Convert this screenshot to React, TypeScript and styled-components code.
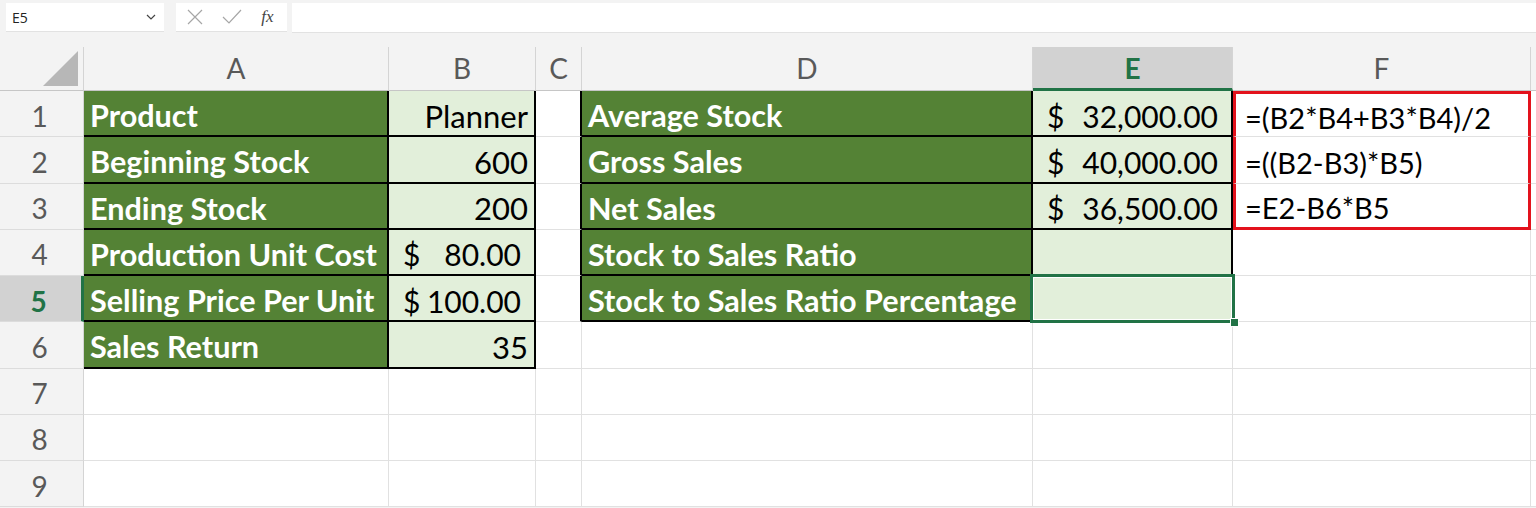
import styled, { createGlobalStyle } from "styled-components";

const GlobalStyle = createGlobalStyle`
  html, body {
    margin: 0;
    padding: 0;
    background: #ffffff;
  }
  body {
    font-family: "Lato", "Liberation Sans", sans-serif;
    overflow: hidden;
  }
`;

const Page = styled.div`
  width: 1536px;
  height: 508px;
  background: #f3f3f3;
  overflow: hidden;
`;

const FormulaBar = styled.div`
  display: flex;
  align-items: center;
  height: 47px;
  padding: 0 0 12px 6px;
  box-sizing: border-box;
  background: #f3f3f3;
`;

const NameBox = styled.div`
  display: flex;
  align-items: center;
  justify-content: space-between;
  width: 158px;
  height: 29px;
  padding: 0 8px 0 6px;
  box-sizing: border-box;
  background: #ffffff;
  border-bottom: 1px solid #e2e2e2;
  font-family: "Open Sans", "Liberation Sans", sans-serif;
  font-size: 14px;
  color: #222;
`;

const Buttons = styled.div`
  display: flex;
  align-items: center;
  justify-content: space-around;
  width: 111px;
  height: 29px;
  margin-left: 12px;
  padding: 0 4px 0 2px;
  box-sizing: border-box;
  background: #ffffff;
  border-bottom: 1px solid #e2e2e2;
`;

const Fx = styled.span`
  font-family: "Liberation Serif", serif;
  font-style: italic;
  font-size: 17px;
  color: #444;
`;

const FormulaInput = styled.div`
  flex: 1;
  height: 29px;
  margin-left: 5px;
  background: #ffffff;
  border-bottom: 1px solid #e2e2e2;
`;

const Sheet = styled.div`
  display: grid;
  grid-template-columns: 84px 305px 147px 46px 451px 200px 298px 1fr;
  grid-template-rows: 44px repeat(9, 46.25px);
  background: #ffffff;
`;

const Corner = styled.div`
  position: relative;
  background: #f3f3f3;
  border-right: 1px solid #d4d4d4;
  border-bottom: 1px solid #c6c6c6;

  &::after {
    content: "";
    position: absolute;
    right: 5px;
    bottom: 4px;
    width: 0;
    height: 0;
    border-left: 35px solid transparent;
    border-bottom: 35px solid #b7b7b7;
  }
`;

const ColHead = styled.div<{ $active?: boolean }>`
  display: flex;
  align-items: center;
  justify-content: center;
  box-sizing: border-box;
  background: ${(p) => (p.$active ? "#d2d2d2" : "#f3f3f3")};
  border-right: 1px solid #d4d4d4;
  border-bottom: ${(p) => (p.$active ? "3px solid #217346" : "1px solid #c6c6c6")};
  color: ${(p) => (p.$active ? "#217346" : "#595959")};
  font-weight: ${(p) => (p.$active ? 700 : 400)};
  font-size: 28px;
  padding-bottom: ${(p) => (p.$active ? "0" : "2px")};
`;

const RowHead = styled.div<{ $active?: boolean }>`
  display: flex;
  align-items: center;
  justify-content: center;
  box-sizing: border-box;
  background: ${(p) => (p.$active ? "#d2d2d2" : "#f3f3f3")};
  border-right: ${(p) => (p.$active ? "3px solid #217346" : "1px solid #d4d4d4")};
  border-bottom: 1px solid #dcdcdc;
  color: ${(p) => (p.$active ? "#217346" : "#595959")};
  font-weight: ${(p) => (p.$active ? 700 : 400)};
  font-size: 28px;
  padding: 4px 4px 0 0;
`;

type Fill = "dark" | "light" | "none";
type Edge = "black" | "red";

const fills: Record<Fill, string> = {
  dark: "#548235",
  light: "#e2efda",
  none: "#ffffff",
};

const edge = (e: Edge | undefined) =>
  e === "black" ? "2px solid #000000" : e === "red" ? "3px solid #e3121c" : "1px solid #e1e1e1";

const Cell = styled.div<{
  $fill?: Fill;
  $align?: "left" | "right";
  $right?: Edge;
  $bottom?: Edge;
  $left?: Edge;
  $top?: Edge;
  $selected?: boolean;
}>`
  position: relative;
  display: flex;
  align-items: center;
  justify-content: ${(p) => (p.$align === "right" ? "flex-end" : "flex-start")};
  box-sizing: border-box;
  padding: 5px 6px 0 ${(p) => (p.$left ? "9px" : "6px")};
  background: ${(p) => fills[p.$fill ?? "none"]};
  border-right: ${(p) => edge(p.$right)};
  border-bottom: ${(p) => edge(p.$bottom)};
  border-left: ${(p) => (p.$left ? edge(p.$left) : "none")};
  border-top: ${(p) => (p.$top ? edge(p.$top) : "none")};
  color: ${(p) => (p.$fill === "dark" ? "#ffffff" : "#000000")};
  font-weight: ${(p) => (p.$fill === "dark" ? 700 : 400)};
  font-size: ${(p) => (p.$fill === "dark" ? "30.6px" : p.$fill === "light" ? "31px" : "29px")};
  white-space: nowrap;
  overflow: visible;

  ${(p) =>
    p.$selected &&
    `
    &::before {
      content: "";
      position: absolute;
      left: -3px;
      top: -2px;
      right: -3px;
      bottom: -2px;
      border: 3px solid #217346;
      box-shadow: inset 0 0 0 1px #ffffff;
      z-index: 2;
    }
    &::after {
      content: "";
      position: absolute;
      right: -7px;
      bottom: -6px;
      width: 7px;
      height: 7px;
      background: #217346;
      border: 1px solid #ffffff;
      z-index: 3;
    }
  `}
`;

const Money = styled.div`
  display: flex;
  justify-content: space-between;
  gap: 6px;
  width: 100%;
  padding: 0 7px 0 8px;
  font-size: 30px;
`;

type CellSpec = {
  text?: string;
  money?: string;
  fill?: Fill;
  align?: "left" | "right";
  right?: Edge;
  bottom?: Edge;
  left?: Edge;
  top?: Edge;
  selected?: boolean;
};

const labelsA = [
  "Product",
  "Beginning Stock",
  "Ending Stock",
  "Production Unit Cost",
  "Selling Price Per Unit",
  "Sales Return",
];

const valuesB: CellSpec[] = [
  { text: "Planner", align: "right" },
  { text: "600", align: "right" },
  { text: "200", align: "right" },
  { money: "80.00" },
  { money: "100.00" },
  { text: "35", align: "right" },
];

const labelsD = [
  "Average Stock",
  "Gross Sales",
  "Net Sales",
  "Stock to Sales Ratio",
  "Stock to Sales Ratio Percentage",
];

const valuesE = ["32,000.00", "40,000.00", "36,500.00", "", ""];

const formulas = ["=(B2*B4+B3*B4)/2", "=((B2-B3)*B5)", "=E2-B6*B5"];

const columns = ["A", "B", "C", "D", "E", "F", ""];

function buildRow(r: number): CellSpec[] {
  const a: CellSpec =
    r < 6 ? { text: labelsA[r], fill: "dark", right: "black", bottom: "black" } : {};
  const b: CellSpec =
    r < 6 ? { ...valuesB[r], fill: "light", right: "black", bottom: "black" } : {};
  const c: CellSpec = r < 5 ? { right: "black" } : {};
  const d: CellSpec =
    r < 5 ? { text: labelsD[r], fill: "dark", right: "black", bottom: "black" } : {};
  const e: CellSpec =
    r < 5
      ? {
          money: valuesE[r] || undefined,
          fill: "light",
          right: r < 4 ? "black" : undefined,
          bottom: r < 4 ? "black" : undefined,
          selected: r === 4,
        }
      : {};
  const f: CellSpec =
    r < 3
      ? {
          text: formulas[r],
          left: "red",
          right: "red",
          top: r === 0 ? "red" : undefined,
          bottom: r === 2 ? "red" : undefined,
        }
      : {};
  return [a, b, c, d, e, f, {}];
}

function SheetCell({ spec }: { spec: CellSpec }) {
  return (
    <Cell
      $fill={spec.fill}
      $align={spec.align}
      $right={spec.right}
      $bottom={spec.bottom}
      $left={spec.left}
      $top={spec.top}
      $selected={spec.selected}>
      {spec.money ? (
        <Money>
          <span>$</span>
          <span>{spec.money}</span>
        </Money>
      ) : (
        spec.text
      )}
    </Cell>
  );
}

export default function App() {
  const rows = Array.from({ length: 9 }, (_, r) => buildRow(r));

  return (
    <Page>
      <GlobalStyle />
      <FormulaBar>
        <NameBox>
          <span>E5</span>
          <svg width="10" height="6" viewBox="0 0 10 6">
            <path d="M1 1l4 4 4-4" fill="none" stroke="#444" strokeWidth="1.2" />
          </svg>
        </NameBox>
        <Buttons>
          <svg width="16" height="16" viewBox="0 0 16 16">
            <path d="M1 1l14 14M15 1L1 15" stroke="#a6a6a6" strokeWidth="1.2" />
          </svg>
          <svg width="20" height="16" viewBox="0 0 20 16">
            <path d="M1 8l6 6L19 1" fill="none" stroke="#a6a6a6" strokeWidth="1.2" />
          </svg>
          <Fx>fx</Fx>
        </Buttons>
        <FormulaInput />
      </FormulaBar>
      <Sheet>
        <Corner />
        {columns.map((c) => (
          <ColHead key={c || "g"} $active={c === "E"}>
            {c}
          </ColHead>
        ))}
        {rows.map((row, r) => [
          <RowHead key={`h${r}`} $active={r === 4}>
            {r + 1}
          </RowHead>,
          ...row.map((spec, c) => <SheetCell key={`${r}-${c}`} spec={spec} />),
        ])}
      </Sheet>
    </Page>
  );
}
